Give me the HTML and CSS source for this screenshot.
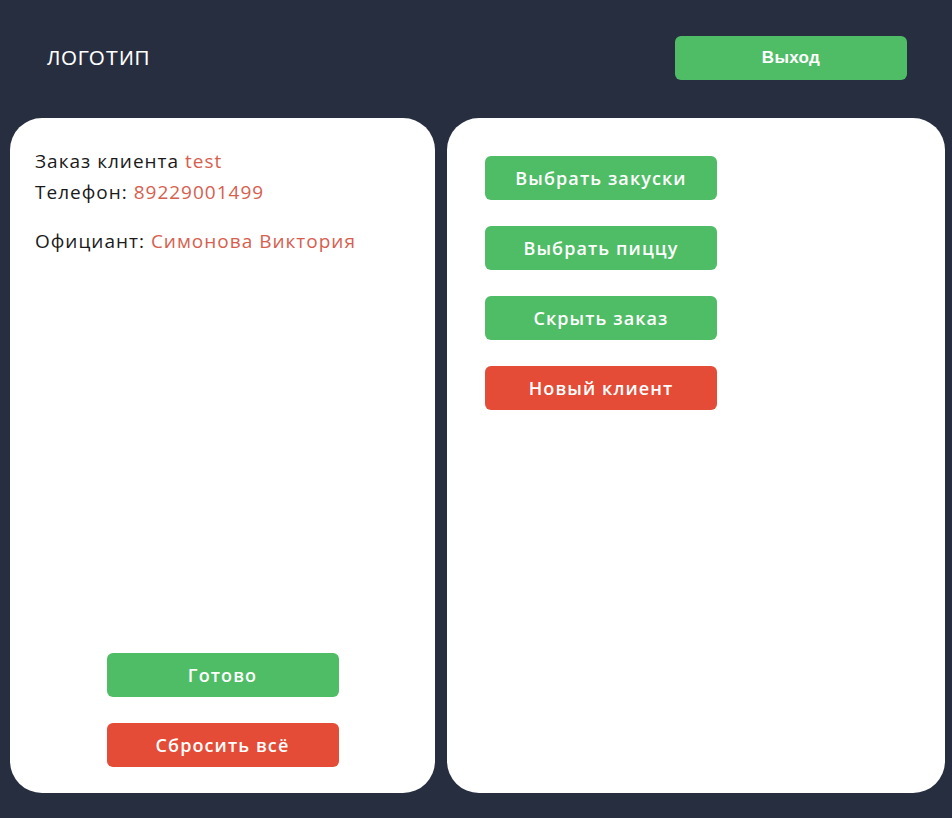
FILE: index.html
```html
<!DOCTYPE html>
<html lang="ru">
<head>
<meta charset="utf-8">
<title>Заказ</title>
<link rel="stylesheet" href="styles.css">
</head>
<body>
<div class="page">
  <header class="header">
    <div class="logo">ЛОГОТИП</div>
    <button class="btn btn-green btn-exit">Выход</button>
  </header>
  <main class="main">
    <section class="card card-left">
      <div class="info">
        <p class="line">Заказ клиента <span class="accent">test</span></p>
        <p class="line">Телефон: <span class="accent">89229001499</span></p>
        <p class="line line-gap">Официант: <span class="accent">Симонова Виктория</span></p>
      </div>
      <div class="actions">
        <button class="btn btn-green">Готово</button>
        <button class="btn btn-red">Сбросить всё</button>
      </div>
    </section>
    <section class="card card-right">
      <button class="btn btn-green">Выбрать закуски</button>
      <button class="btn btn-green">Выбрать пиццу</button>
      <button class="btn btn-green">Скрыть заказ</button>
      <button class="btn btn-red">Новый клиент</button>
    </section>
  </main>
</div>
</body>
</html>
```
FILE: styles.css
```css
* { box-sizing: border-box; }
html, body { margin: 0; padding: 0; }
body {
  background: #272e40;
  font-family: "Open Sans", "Noto Sans", sans-serif;
  width: 952px;
  height: 818px;
  overflow: hidden;
}
.page {
  display: flex;
  flex-direction: column;
  height: 818px;
}
.header {
  display: flex;
  justify-content: space-between;
  align-items: center;
  padding: 36px 45px 38px 47px;
}
.logo {
  color: #ffffff;
  font-family: "Liberation Sans", Arial, sans-serif;
  font-size: 20px;
  letter-spacing: 1.2px;
}
.btn {
  width: 232px;
  height: 44px;
  border: none;
  border-radius: 6px;
  color: #ffffff;
  font-family: "Open Sans", sans-serif;
  font-size: 18px;
  font-weight: 600;
  letter-spacing: 1.1px;
  padding: 0;
  cursor: pointer;
}
.btn-exit {
  font-family: "Liberation Sans", Arial, sans-serif;
  font-size: 17px;
  font-weight: 700;
  letter-spacing: 0.3px;
}
.btn-green { background: #4fbd66; }
.btn-red { background: #e54c37; }
.main {
  flex: 1;
  display: flex;
  gap: 12px;
  padding: 0 7px 25px 10px;
}
.card {
  background: #ffffff;
  border-radius: 32px;
}
.card-left {
  width: 425px;
  display: flex;
  flex-direction: column;
  padding: 28px 25px 26px;
}
.line {
  margin: 0;
  font-size: 19px;
  line-height: 31px;
  letter-spacing: 1px;
  color: #1a1a1a;
}
.line-gap { margin-top: 18px; }
.accent { color: #d6604e; }
.actions {
  margin-top: auto;
  display: flex;
  flex-direction: column;
  align-items: center;
  gap: 26px;
}
.card-right {
  flex: 1;
  display: flex;
  flex-direction: column;
  align-items: flex-start;
  gap: 26px;
  padding: 38px 38px;
}
```
